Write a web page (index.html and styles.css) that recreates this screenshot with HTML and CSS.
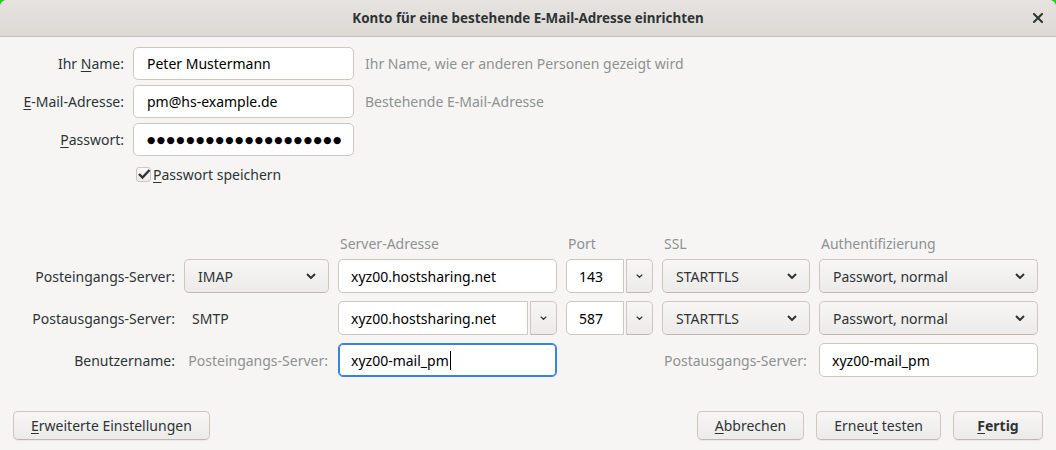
FILE: index.html
```html
<!DOCTYPE html>
<html lang="de">
<head>
<meta charset="utf-8">
<title>Konto für eine bestehende E-Mail-Adresse einrichten</title>
<link rel="stylesheet" href="styles.css">
</head>
<body>
<div class="dialog">
  <header class="titlebar">
    <span></span>
    <h1 class="title">Konto für eine bestehende E-Mail-Adresse einrichten</h1>
    <button class="close" aria-label="Schließen">
      <svg width="10" height="10" viewBox="0 0 10 10"><path d="M1 1L9 9M9 1L1 9" stroke="#2e3436" stroke-width="2" stroke-linecap="square"/></svg>
    </button>
  </header>

  <main class="content">
    <section class="identity">
      <label class="lbl">Ihr <u>N</u>ame:</label>
      <div class="entry">Peter Mustermann</div>
      <span class="hint">Ihr Name, wie er anderen Personen gezeigt wird</span>

      <label class="lbl"><u>E</u>-Mail-Adresse:</label>
      <div class="entry">pm@hs-example.de</div>
      <span class="hint">Bestehende E-Mail-Adresse</span>

      <label class="lbl"><u>P</u>asswort:</label>
      <div class="entry"><span class="dots">●●●●●●●●●●●●●●●●●●●●</span></div>
      <span></span>

      <div class="check-row">
        <span class="checkbox">
          <svg width="14" height="12" viewBox="0 0 14 12"><path d="M2 6L5.5 9.5L12.5 2" fill="none" stroke="#2e3436" stroke-width="2.4"/></svg>
        </span>
        <span><u>P</u>asswort speichern</span>
      </div>
    </section>

    <section class="servers">
      <span></span>
      <span></span>
      <span class="colhead">Server-Adresse</span>
      <span class="colhead">Port</span>
      <span class="colhead">SSL</span>
      <span class="colhead">Authentifizierung</span>

      <span class="lbl">Posteingangs-Server:</span>
      <div class="combo"><span>IMAP</span><svg class="chev" width="10" height="6" viewBox="0 0 10 6"><path d="M1 1L5 5L9 1" fill="none" stroke="#2e3436" stroke-width="2"/></svg></div>
      <div class="entry entry-srv">xyz00.hostsharing.net</div>
      <div class="group">
        <div class="entry entry-joined entry-port">143</div>
        <div class="dropbtn"><svg width="7" height="4" viewBox="0 0 7 4"><path d="M0.7 0.6L3.5 3.3L6.3 0.6" fill="none" stroke="#2e3436" stroke-width="1.3"/></svg></div>
      </div>
      <div class="combo"><span>STARTTLS</span><svg class="chev" width="10" height="6" viewBox="0 0 10 6"><path d="M1 1L5 5L9 1" fill="none" stroke="#2e3436" stroke-width="2"/></svg></div>
      <div class="combo"><span>Passwort, normal</span><svg class="chev" width="10" height="6" viewBox="0 0 10 6"><path d="M1 1L5 5L9 1" fill="none" stroke="#2e3436" stroke-width="2"/></svg></div>

      <span class="lbl">Postausgangs-Server:</span>
      <span class="plain">SMTP</span>
      <div class="group">
        <div class="entry entry-joined entry-srv">xyz00.hostsharing.net</div>
        <div class="dropbtn"><svg width="7" height="4" viewBox="0 0 7 4"><path d="M0.7 0.6L3.5 3.3L6.3 0.6" fill="none" stroke="#2e3436" stroke-width="1.3"/></svg></div>
      </div>
      <div class="group">
        <div class="entry entry-joined entry-port">587</div>
        <div class="dropbtn"><svg width="7" height="4" viewBox="0 0 7 4"><path d="M0.7 0.6L3.5 3.3L6.3 0.6" fill="none" stroke="#2e3436" stroke-width="1.3"/></svg></div>
      </div>
      <div class="combo"><span>STARTTLS</span><svg class="chev" width="10" height="6" viewBox="0 0 10 6"><path d="M1 1L5 5L9 1" fill="none" stroke="#2e3436" stroke-width="2"/></svg></div>
      <div class="combo"><span>Passwort, normal</span><svg class="chev" width="10" height="6" viewBox="0 0 10 6"><path d="M1 1L5 5L9 1" fill="none" stroke="#2e3436" stroke-width="2"/></svg></div>

      <span class="lbl">Benutzername:</span>
      <span class="sub-hint">Posteingangs-Server:</span>
      <div class="entry entry-srv focused">xyz00-mail_pm<span class="caret"></span></div>
      <span></span>
      <span class="sub-hint sub-hint-left">Postausgangs-Server:</span>
      <div class="entry entry-srv">xyz00-mail_pm</div>
    </section>

    <footer class="footer">
      <button class="btn"><u>E</u>rweiterte Einstellungen</button>
      <div class="actions">
        <button class="btn"><u>A</u>bbrechen</button>
        <button class="btn">Erneu<u>t</u> testen</button>
        <button class="btn btn-default"><u>F</u>ertig</button>
      </div>
    </footer>
  </main>
</div>
</body>
</html>
```

FILE: styles.css
```css
html, body {
  margin: 0;
  padding: 0;
}

body {
  background: #22d022;
  font-family: "Noto Sans", "DejaVu Sans", sans-serif;
  font-size: 14px;
  color: #2e3436;
}

u {
  text-decoration: underline;
  text-underline-offset: 2px;
  text-decoration-thickness: 1px;
}

.dialog {
  width: 1056px;
  height: 450px;
  display: flex;
  flex-direction: column;
  background: #f6f5f4;
  border-radius: 7px 7px 0 0;
  overflow: hidden;
}

/* title bar */
.titlebar {
  height: 36px;
  flex: none;
  border-bottom: 1px solid #c4bfba;
  background: linear-gradient(#e6e3e0, #dcd9d5);
  display: grid;
  grid-template-columns: 1fr auto 1fr;
  align-items: center;
}

.title {
  margin: 0;
  font-size: 13.4px;
  font-weight: bold;
  color: #2e3436;
}

.close {
  justify-self: end;
  margin-right: 9px;
  width: 18px;
  height: 18px;
  padding: 0;
  border: none;
  background: none;
  display: flex;
  align-items: center;
  justify-content: center;
}

/* content */
.content {
  flex: 1;
  display: flex;
  flex-direction: column;
  padding: 10px 18px 10px 13px;
}

.lbl {
  text-align: right;
  white-space: nowrap;
}

.hint {
  color: #8e9192;
  margin-left: 2px;
  white-space: nowrap;
}

.entry {
  height: 33px;
  box-sizing: border-box;
  border: 1px solid #cdc7c2;
  border-radius: 5px;
  background: #ffffff;
  padding: 0 13px;
  display: flex;
  align-items: center;
  white-space: nowrap;
  overflow: hidden;
  color: #000;
}

.identity {
  display: grid;
  grid-template-columns: 111px 221px auto;
  column-gap: 9px;
  row-gap: 5px;
  align-items: center;
}

.dots {
  font-family: "DejaVu Sans", sans-serif;
  font-size: 9.5px;
  letter-spacing: 1.5px;
  color: #000;
}

.check-row {
  grid-column: 2 / 4;
  display: flex;
  align-items: center;
  gap: 2px;
  margin-top: 5px;
  padding-left: 3px;
  height: 16px;
}

.checkbox {
  width: 15px;
  height: 15px;
  box-sizing: border-box;
  border: 1px solid #cdc7c2;
  border-radius: 3px;
  background: linear-gradient(#fbfafa, #edebe9);
  display: flex;
  align-items: center;
  justify-content: center;
}

.checkbox svg {
  margin-left: 1px;
  flex: none;
}

/* servers */
.servers {
  margin-top: 47px;
  display: grid;
  grid-template-columns: 162px 145px 219px 87px 148px 219px;
  grid-template-rows: 22px 34px 34px 34px;
  column-gap: 9px;
  row-gap: 8px;
  align-items: center;
}

.colhead {
  align-self: end;
  line-height: 14px;
  color: #8e9192;
  padding-left: 2px;
  white-space: nowrap;
}

.servers .entry {
  height: 34px;
  padding: 0 12px;
}

.combo {
  height: 34px;
  box-sizing: border-box;
  border: 1px solid #cdc7c2;
  border-bottom-color: #bfb8b1;
  border-radius: 5px;
  background: linear-gradient(#f7f6f5, #edebe9);
  display: flex;
  align-items: center;
  justify-content: space-between;
  padding: 0 12px 0 13px;
  white-space: nowrap;
}

.plain {
  padding-left: 8px;
}

.group {
  display: flex;
  gap: 2px;
  height: 34px;
}

.group .entry-joined {
  flex: 1;
  border-radius: 5px 0 0 5px;
}

.dropbtn {
  width: 27px;
  flex: none;
  box-sizing: border-box;
  border: 1px solid #cdc7c2;
  border-bottom-color: #bfb8b1;
  border-radius: 0 5px 5px 0;
  background: linear-gradient(#f7f6f5, #edebe9);
  display: flex;
  align-items: center;
  justify-content: center;
}

.sub-hint {
  color: #8e9192;
  text-align: right;
  padding-right: 1px;
  white-space: nowrap;
}

.sub-hint-left {
  text-align: left;
  padding-left: 2px;
}

.focused {
  border-color: #3584e4;
  box-shadow: inset 0 0 0 1px #3584e4;
}

.caret {
  display: inline-block;
  width: 1px;
  height: 19px;
  background: #000;
  margin-left: 1px;
}

/* footer */
.footer {
  margin-top: auto;
  display: flex;
  justify-content: space-between;
  align-items: center;
  margin-right: -5px;
}

.actions {
  display: flex;
  gap: 12px;
}

.btn {
  height: 29px;
  box-sizing: border-box;
  padding: 0 17px;
  border: 1px solid #cdc7c2;
  border-bottom-color: #bfb8b1;
  border-radius: 5px;
  background: linear-gradient(#f7f6f5, #edebe9);
  box-shadow: 0 1px 1px rgba(0, 0, 0, 0.05);
  font-family: inherit;
  font-size: 14px;
  color: #2e3436;
  white-space: nowrap;
}

.btn-default {
  font-weight: bold;
  min-width: 90px;
}
```
